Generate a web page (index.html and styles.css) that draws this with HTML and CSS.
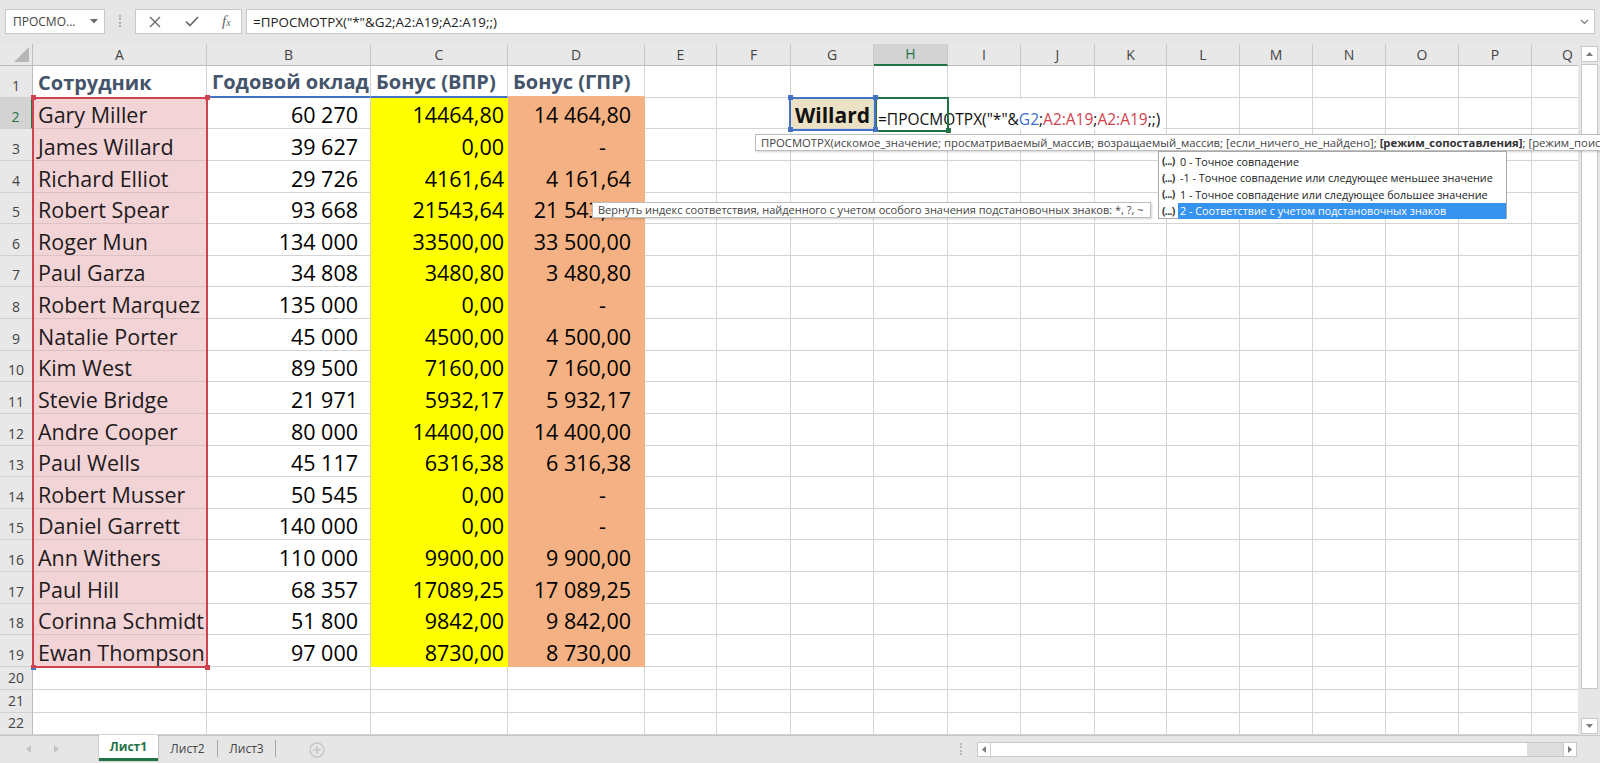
FILE: index.html
```html
<!DOCTYPE html>
<html lang="ru">
<head>
<meta charset="utf-8">
<title>Excel</title>
<link rel="stylesheet" href="styles.css">
</head>
<body>
<div class="app">
  <div class="fbar">
    <div class="namebox"><span>ПРОСМО...</span><svg width="8" height="5" viewBox="0 0 8 5"><path d="M0 0 H8 L4 4.5 Z" fill="#6a6a6a"/></svg></div>
    <div class="grip"></div>
    <div class="fbtns">
      <svg width="12" height="12" viewBox="0 0 12 12"><path d="M1 1 L11 11 M11 1 L1 11" stroke="#6a6a6a" stroke-width="1.4" fill="none"/></svg>
      <svg width="14" height="11" viewBox="0 0 14 11"><path d="M1 5.5 L5 9.5 L13 1" stroke="#6a6a6a" stroke-width="1.7" fill="none"/></svg>
      <span class="fx">f<small>x</small></span>
    </div>
    <div class="finput"><span>=ПРОСМОТРХ("*"&amp;G2;A2:A19;A2:A19;;)</span><svg width="9" height="6" viewBox="0 0 9 6"><path d="M1 1 L4.5 4.5 L8 1" stroke="#7a7a7a" stroke-width="1.2" fill="none"/></svg></div>
  </div>

  <div class="main">
    <div class="sheet">
      <div class="row h">
        <div class="corner"><svg width="15" height="15" viewBox="0 0 15 15"><path d="M15 0 V15 H0 Z" fill="#b7b7b7"/></svg></div>
        <div>A</div><div>B</div><div>C</div><div>D</div><div>E</div><div>F</div><div>G</div><div class="act">H</div><div>I</div><div>J</div><div>K</div><div>L</div><div>M</div><div>N</div><div>O</div><div>P</div><div>Q</div>
      </div>
      <div class="row"><div class="rh">1</div><div class="c hd">Сотрудник</div><div class="c hd bl">Годовой оклад</div><div class="c hd bl">Бонус (ВПР)</div><div class="c hd or">Бонус (ГПР)</div><i></i><i></i><i></i><i></i><i></i><i></i><i></i><i></i><i></i><i></i><i></i><i></i><i></i></div>
      <div class="row"><div class="rh act">2</div><div class="c a">Gary Miller</div><div class="c b">60 270</div><div class="c y">14464,80</div><div class="c o">14 464,80</div><i></i><i></i><div class="c g">Willard</div><i></i><i></i><i></i><i></i><i></i><i></i><i></i><i></i><i></i><i></i></div>
      <div class="row"><div class="rh">3</div><div class="c a">James Willard</div><div class="c b">39 627</div><div class="c y">0,00</div><div class="c o dash">-</div><i></i><i></i><i></i><i></i><i></i><i></i><i></i><i></i><i></i><i></i><i></i><i></i><i></i></div>
      <div class="row"><div class="rh">4</div><div class="c a">Richard Elliot</div><div class="c b">29 726</div><div class="c y">4161,64</div><div class="c o">4 161,64</div><i></i><i></i><i></i><i></i><i></i><i></i><i></i><i></i><i></i><i></i><i></i><i></i><i></i></div>
      <div class="row"><div class="rh">5</div><div class="c a">Robert Spear</div><div class="c b">93 668</div><div class="c y">21543,64</div><div class="c o">21 543,64</div><i></i><i></i><i></i><i></i><i></i><i></i><i></i><i></i><i></i><i></i><i></i><i></i><i></i></div>
      <div class="row"><div class="rh">6</div><div class="c a">Roger Mun</div><div class="c b">134 000</div><div class="c y">33500,00</div><div class="c o">33 500,00</div><i></i><i></i><i></i><i></i><i></i><i></i><i></i><i></i><i></i><i></i><i></i><i></i><i></i></div>
      <div class="row"><div class="rh">7</div><div class="c a">Paul Garza</div><div class="c b">34 808</div><div class="c y">3480,80</div><div class="c o">3 480,80</div><i></i><i></i><i></i><i></i><i></i><i></i><i></i><i></i><i></i><i></i><i></i><i></i><i></i></div>
      <div class="row"><div class="rh">8</div><div class="c a">Robert Marquez</div><div class="c b">135 000</div><div class="c y">0,00</div><div class="c o dash">-</div><i></i><i></i><i></i><i></i><i></i><i></i><i></i><i></i><i></i><i></i><i></i><i></i><i></i></div>
      <div class="row"><div class="rh">9</div><div class="c a">Natalie Porter</div><div class="c b">45 000</div><div class="c y">4500,00</div><div class="c o">4 500,00</div><i></i><i></i><i></i><i></i><i></i><i></i><i></i><i></i><i></i><i></i><i></i><i></i><i></i></div>
      <div class="row"><div class="rh">10</div><div class="c a">Kim West</div><div class="c b">89 500</div><div class="c y">7160,00</div><div class="c o">7 160,00</div><i></i><i></i><i></i><i></i><i></i><i></i><i></i><i></i><i></i><i></i><i></i><i></i><i></i></div>
      <div class="row"><div class="rh">11</div><div class="c a">Stevie Bridge</div><div class="c b">21 971</div><div class="c y">5932,17</div><div class="c o">5 932,17</div><i></i><i></i><i></i><i></i><i></i><i></i><i></i><i></i><i></i><i></i><i></i><i></i><i></i></div>
      <div class="row"><div class="rh">12</div><div class="c a">Andre Cooper</div><div class="c b">80 000</div><div class="c y">14400,00</div><div class="c o">14 400,00</div><i></i><i></i><i></i><i></i><i></i><i></i><i></i><i></i><i></i><i></i><i></i><i></i><i></i></div>
      <div class="row"><div class="rh">13</div><div class="c a">Paul Wells</div><div class="c b">45 117</div><div class="c y">6316,38</div><div class="c o">6 316,38</div><i></i><i></i><i></i><i></i><i></i><i></i><i></i><i></i><i></i><i></i><i></i><i></i><i></i></div>
      <div class="row"><div class="rh">14</div><div class="c a">Robert Musser</div><div class="c b">50 545</div><div class="c y">0,00</div><div class="c o dash">-</div><i></i><i></i><i></i><i></i><i></i><i></i><i></i><i></i><i></i><i></i><i></i><i></i><i></i></div>
      <div class="row"><div class="rh">15</div><div class="c a">Daniel Garrett</div><div class="c b">140 000</div><div class="c y">0,00</div><div class="c o dash">-</div><i></i><i></i><i></i><i></i><i></i><i></i><i></i><i></i><i></i><i></i><i></i><i></i><i></i></div>
      <div class="row"><div class="rh">16</div><div class="c a">Ann Withers</div><div class="c b">110 000</div><div class="c y">9900,00</div><div class="c o">9 900,00</div><i></i><i></i><i></i><i></i><i></i><i></i><i></i><i></i><i></i><i></i><i></i><i></i><i></i></div>
      <div class="row"><div class="rh">17</div><div class="c a">Paul Hill</div><div class="c b">68 357</div><div class="c y">17089,25</div><div class="c o">17 089,25</div><i></i><i></i><i></i><i></i><i></i><i></i><i></i><i></i><i></i><i></i><i></i><i></i><i></i></div>
      <div class="row"><div class="rh">18</div><div class="c a">Corinna Schmidt</div><div class="c b">51 800</div><div class="c y">9842,00</div><div class="c o">9 842,00</div><i></i><i></i><i></i><i></i><i></i><i></i><i></i><i></i><i></i><i></i><i></i><i></i><i></i></div>
      <div class="row"><div class="rh">19</div><div class="c a">Ewan Thompson</div><div class="c b">97 000</div><div class="c y">8730,00</div><div class="c o">8 730,00</div><i></i><i></i><i></i><i></i><i></i><i></i><i></i><i></i><i></i><i></i><i></i><i></i><i></i></div>
      <div class="row s"><div class="rh">20</div><i></i><i></i><i></i><i></i><i></i><i></i><i></i><i></i><i></i><i></i><i></i><i></i><i></i><i></i><i></i><i></i><i></i></div>
      <div class="row s"><div class="rh">21</div><i></i><i></i><i></i><i></i><i></i><i></i><i></i><i></i><i></i><i></i><i></i><i></i><i></i><i></i><i></i><i></i><i></i></div>
      <div class="row s last"><div class="rh">22</div><i></i><i></i><i></i><i></i><i></i><i></i><i></i><i></i><i></i><i></i><i></i><i></i><i></i><i></i><i></i><i></i><i></i></div>
    </div>

    <div class="vs">
      <div class="sb"><svg width="7" height="4" viewBox="0 0 7 4"><path d="M0 4 L3.5 0 L7 4 Z" fill="#7a7a7a"/></svg></div>
      <div class="thumb"></div>
      <div class="sb down"><svg width="7" height="4" viewBox="0 0 7 4"><path d="M0 0 L3.5 4 L7 0 Z" fill="#7a7a7a"/></svg></div>
    </div>

    <div class="rng red"><span class="k tl"></span><span class="k tr"></span><span class="k bl"></span><span class="k br"></span></div>
    <div class="edit">=ПРОСМОТРХ("*"&amp;<span class="rb">G2</span>;<span class="rr">A2:A19</span>;<span class="rr">A2:A19</span>;;)</div>
    <div class="actcell"><span class="k br"></span></div>
    <div class="rng blue"><span class="k tl"></span><span class="k tr"></span><span class="k bl"></span><span class="k br"></span></div>

    <div class="tip tip1">ПРОСМОТРХ(искомое_значение; просматриваемый_массив; возращаемый_массив; [если_ничего_не_найдено]; <b>[режим_сопоставления]</b>; [режим_поиска])</div>
    <div class="tip tip2">Вернуть индекс соответствия, найденного с учетом особого значения подстановочных знаков: *, ?, ~</div>
    <div class="dd">
      <div class="it"><span class="ic">(...)</span><span class="t">0 - Точное совпадение</span></div>
      <div class="it"><span class="ic">(...)</span><span class="t">-1 - Точное совпадение или следующее меньшее значение</span></div>
      <div class="it"><span class="ic">(...)</span><span class="t">1 - Точное совпадение или следующее большее значение</span></div>
      <div class="it sel"><span class="ic">(...)</span><span class="t">2 - Соответствие с учетом подстановочных знаков</span></div>
    </div>
  </div>

  <div class="tabbar">
    <div class="nav">
      <svg width="5" height="8" viewBox="0 0 5 8"><path d="M5 0 V8 L0 4 Z" fill="#c3c3c3"/></svg>
      <svg width="5" height="8" viewBox="0 0 5 8"><path d="M0 0 V8 L5 4 Z" fill="#c3c3c3"/></svg>
    </div>
    <div class="tab on">Лист1</div>
    <div class="tab t2">Лист2</div>
    <div class="tsep"></div>
    <div class="tab t3">Лист3</div>
    <div class="tsep"></div>
    <div class="plus"><svg width="16" height="16" viewBox="0 0 16 16"><circle cx="8" cy="8" r="7" fill="none" stroke="#c4c4c4" stroke-width="1.3"/><path d="M8 4.2 V11.8 M4.2 8 H11.8" stroke="#c4c4c4" stroke-width="1.5"/></svg></div>
    <div class="hgrip"></div>
    <div class="hs">
      <div class="hl"><svg width="4" height="7" viewBox="0 0 4 7"><path d="M4 0 V7 L0 3.5 Z" fill="#7a7a7a"/></svg></div>
      <div class="hth"></div>
      <div class="hr"><svg width="4" height="7" viewBox="0 0 4 7"><path d="M0 0 V7 L4 3.5 Z" fill="#7a7a7a"/></svg></div>
    </div>
  </div>
</div>
</body>
</html>
```

FILE: styles.css
```css
* { box-sizing: border-box; margin: 0; padding: 0; }
html, body { width: 1600px; height: 763px; overflow: hidden; }
body { font-family: "Open Sans", "DejaVu Sans", sans-serif; background: #e6e6e6; color: #222; }
.app { width: 1600px; height: 763px; display: flex; flex-direction: column; overflow: hidden; }

/* formula bar */
.fbar { height: 44px; display: flex; align-items: flex-start; padding-top: 9px; background: #e6e6e6; }
.namebox { margin-left: 5px; width: 100px; height: 25px; background: #fff; border: 1px solid #c8c8c8; display: flex; align-items: center; justify-content: space-between; padding: 0 6px 0 7px; font-size: 12px; color: #444; }
.grip { margin-left: 14px; margin-top: 6px; width: 2px; height: 12px; border-left: 2px dotted #b0b0b0; }
.fbtns { margin-left: 14px; width: 107px; height: 25px; background: #fff; border: 1px solid #c8c8c8; display: flex; align-items: center; padding-left: 13px; }
.fbtns svg:nth-child(2) { margin-left: 24px; }
.fx { margin-left: 23px; font-family: "Liberation Serif", serif; font-style: italic; font-size: 15px; color: #666; line-height: 1; }
.fx small { font-size: 10px; }
.finput { margin-left: 4px; margin-right: 5px; flex: 1; height: 25px; background: #fff; border: 1px solid #c8c8c8; display: flex; align-items: center; justify-content: space-between; padding: 0 5px 0 6px; font-size: 13.4px; color: #222; }

/* sheet */
.main { position: relative; height: 691px; display: flex; }
.sheet { width: 1578px; background: #fff; overflow: hidden; flex: none; }
.row { display: grid; grid-template-columns: 33px 174px 164px 137px 137px 72px 74px 83px 74px 73px 74px 72px 73px 73px 73px 73px 73px 72px; height: 31.63px; width: 1604px; }
.row.h { height: 22px; }
.row.s { height: 23px; }
.row.last { height: 22px; }
.row > * { border-right: 1px solid #d4d4d4; border-bottom: 1px solid #d4d4d4; display: flex; align-items: flex-end; white-space: nowrap; min-width: 0; font-style: normal; }

.row.h > * { background: #e8e8e8; border-right-color: #c8c8c8; border-bottom-color: #bcbcbc; align-items: center; justify-content: center; font-size: 14px; line-height: 18px; color: #444; }
.row.h > .act { background: #d3d3d3; color: #217346; border-bottom: 2px solid #217346; }
.row.h > .corner { align-items: flex-end; justify-content: flex-end; padding: 0 3px 3px 0; border-right-color: #bcbcbc; }

.rh { background: #e8e8e8; border-right-color: #bcbcbc !important; border-bottom-color: #d0d0d0 !important; justify-content: center; font-size: 14px; line-height: 18px; padding-bottom: 2px; color: #444; }
.rh.act { background: #d3d3d3; color: #217346; border-right: 2px solid #217346 !important; }

.c { font-size: 21.5px; line-height: 26px; padding: 0 5px; color: #000; }
.a { background: #f2d4d7; border-bottom-color: #ddc0c3; color: #221a1b; }
.b { justify-content: flex-end; padding-right: 12px; }
.y { background: #ffff00; border-color: #ffff00; justify-content: flex-end; padding-right: 3px; }
.o { background: #f4b183; border-color: #f4b183; justify-content: flex-end; padding-right: 13px; }
.o.dash { padding-right: 38px; }
.hd { font-weight: 700; font-size: 20px; color: #44546a; padding-bottom: 1px; }
.bl { border-bottom: 2px solid #4472c4; }
.or { border-bottom: 2px solid #f4b183; }
.g { background: #ebe1c5; font-weight: 700; font-size: 21px; padding-left: 4px; color: #111; }

/* vertical scrollbar */
.vs { width: 22px; flex: none; background: #e6e6e6; display: flex; flex-direction: column; padding: 2px 2px 1px 3px; }
.sb { height: 16px; background: #fff; border: 1px solid #c8c8c8; display: flex; align-items: center; justify-content: center; flex: none; }
.sb.down { margin-top: auto; }
.thumb { margin-top: 2px; height: 625px; background: #fff; border: 1px solid #c8c8c8; flex: none; }

/* overlays */
.rng { position: absolute; top: 52.5px; height: 34px; border: 2px solid; }
.rng.red { left: 32px; width: 176px; height: 571.5px; border-color: #d0424e; }
.rng.blue { left: 789px; width: 87px; border-color: #4472c4; }
.k { position: absolute; width: 5px; height: 5px; }
.red .k { background: #d0424e; }
.blue .k { background: #4472c4; }
.k.tl { left: -3.5px; top: -3.5px; }
.k.tr { right: -3.5px; top: -3.5px; }
.k.bl { left: -3.5px; bottom: -3.5px; }
.k.br { right: -3.5px; bottom: -3.5px; }

.edit { position: absolute; left: 877px; top: 55px; width: 286px; height: 30px; background: #fff; display: flex; align-items: flex-end; padding: 0 0 1px 1px; font-size: 15.5px; line-height: 18px; white-space: nowrap; color: #111; }
.rb { color: #3c6fd0; }
.rr { color: #d0424e; }
.actcell { position: absolute; left: 875px; top: 52.5px; width: 74px; height: 35px; border: 2px solid #217346; }
.actcell .k { background: #217346; }

.tip { position: absolute; background: #fff; border: 1px solid #bdbdbd; box-shadow: 1px 1px 2px rgba(0,0,0,0.18); font-size: 11px; line-height: 15px; color: #444; white-space: nowrap; padding: 0 5px; }
.tip1 { left: 755px; top: 90px; height: 17px; font-size: 11.3px; }
.tip1 b { color: #333; }
.tip2 { left: 592px; top: 158px; width: 559px; height: 16px; line-height: 14px; }

.dd { position: absolute; left: 1158px; top: 107px; width: 349px; height: 68px; background: #fff; border: 1px solid #a8a8a8; padding-top: 1px; font-size: 10.8px; color: #222; }
.it { height: 16.5px; display: flex; align-items: center; }
.ic { width: 19px; padding-left: 3px; font-size: 10.5px; font-weight: 700; letter-spacing: -0.7px; color: #333; flex: none; line-height: 14px; overflow: hidden; }
.t { flex: 1; height: 100%; display: flex; align-items: center; padding-left: 2px; }
.it.sel .t { background: #3592ee; color: #fff; }

/* tab bar */
.tabbar { height: 28px; display: flex; align-items: flex-start; background: #e6e6e6; border-top: 1px solid #c6c6c6; }
.nav { width: 99px; height: 25px; display: flex; align-items: center; padding-left: 26px; gap: 23px; }
.tab { height: 25px; display: flex; align-items: center; justify-content: center; font-size: 12px; color: #444; }
.tab.on { width: 59px; margin-top: -1px; height: 26px; background: #fff; color: #217346; font-weight: 700; border-bottom: 3px solid #217346; box-shadow: 1px 0 1px rgba(0,0,0,0.15), -1px 0 1px rgba(0,0,0,0.1); }
.tab.t2 { width: 59px; }
.tab.t3 { width: 57px; }
.tsep { width: 1px; height: 17px; margin-top: 4px; background: #a8a8a8; }
.plus { margin-left: 33px; margin-top: 5px; width: 16px; height: 16px; }
.hgrip { margin-left: auto; margin-top: 7px; width: 2px; height: 12px; border-left: 2px dotted #b8b8b8; }
.hs { margin-left: 15px; margin-right: 23px; margin-top: 6px; width: 600px; height: 15px; border: 1px solid #c8c8c8; background: #dedede; display: flex; }
.hl { width: 13px; background: #fff; border-right: 1px solid #d0d0d0; display: flex; align-items: center; justify-content: center; }
.hth { width: 536px; background: #fff; }
.hr { margin-left: auto; width: 13px; background: #fff; border-left: 1px solid #c8c8c8; display: flex; align-items: center; justify-content: center; }
```
